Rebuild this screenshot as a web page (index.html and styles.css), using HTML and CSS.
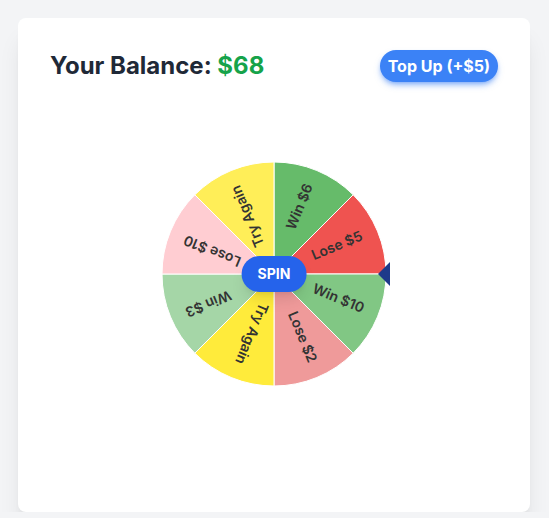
FILE: index.html
```html
<!DOCTYPE html>
<html lang="en">
<head>
<meta charset="utf-8">
<title>Spin the Wheel</title>
<link rel="stylesheet" href="styles.css">
</head>
<body>
<div class="card">
  <div class="header">
    <h1 class="balance">Your Balance: <span class="amount">$68</span></h1>
    <button class="topup">Top Up (+$5)</button>
  </div>
  <div class="wheel-wrap">
    <svg class="wheel" viewBox="0 0 224 224" width="224" height="224">
      <g class="segments">
        <path d="M112,112 L112,0 A112,112 0 0,1 191.196,32.804 Z" fill="#66bb6a"/>
        <path d="M112,112 L191.196,32.804 A112,112 0 0,1 224,112 Z" fill="#ef5350"/>
        <path d="M112,112 L224,112 A112,112 0 0,1 191.196,191.196 Z" fill="#81c784"/>
        <path d="M112,112 L191.196,191.196 A112,112 0 0,1 112,224 Z" fill="#ef9a9a"/>
        <path d="M112,112 L112,224 A112,112 0 0,1 32.804,191.196 Z" fill="#ffeb3b"/>
        <path d="M112,112 L32.804,191.196 A112,112 0 0,1 0,112 Z" fill="#a5d6a7"/>
        <path d="M112,112 L0,112 A112,112 0 0,1 32.804,32.804 Z" fill="#ffcdd2"/>
        <path d="M112,112 L32.804,32.804 A112,112 0 0,1 112,0 Z" fill="#ffee58"/>
      </g>
      <g class="labels">
        <text x="208" y="109" transform="rotate(-67.5 112 112)">Win $6</text>
        <text x="208" y="109" transform="rotate(-22.5 112 112)">Lose $5</text>
        <text x="208" y="109" transform="rotate(22.5 112 112)">Win $10</text>
        <text x="208" y="109" transform="rotate(67.5 112 112)">Lose $2</text>
        <text x="208" y="109" transform="rotate(112.5 112 112)">Try Again</text>
        <text x="208" y="109" transform="rotate(157.5 112 112)">Win $3</text>
        <text x="208" y="109" transform="rotate(202.5 112 112)">Lose $10</text>
        <text x="208" y="109" transform="rotate(247.5 112 112)">Try Again</text>
      </g>
    </svg>
    <button class="spin">SPIN</button>
    <div class="pointer"></div>
  </div>
</div>
</body>
</html>
```
FILE: styles.css
```css
* { box-sizing: border-box; }
body {
  margin: 0;
  padding: 18px 0 0 18px;
  background: #f3f4f6;
  font-family: Inter, "Noto Sans", sans-serif;
}
.card {
  width: 512px;
  height: 494px;
  background: #ffffff;
  border-radius: 8px;
  padding: 32px;
  box-shadow: 0 20px 25px -5px rgba(0,0,0,0.1), 0 8px 10px -6px rgba(0,0,0,0.1);
}
.header {
  display: flex;
  justify-content: space-between;
  align-items: center;
  height: 32px;
}
.balance {
  margin: 0;
  font-size: 24px;
  line-height: 32px;
  font-weight: 700;
  color: #1f2937;
}
.amount { color: #16a34a; }
.topup {
  font-family: inherit;
  font-size: 16px;
  line-height: 24px;
  font-weight: 700;
  color: #ffffff;
  background: #3b82f6;
  border: none;
  border-radius: 9999px;
  padding: 4px 8px;
  box-shadow: 0 4px 6px -1px rgba(59,130,246,0.5), 0 2px 4px -2px rgba(59,130,246,0.5);
}
.wheel-wrap {
  position: relative;
  width: 224px;
  height: 224px;
  margin: 80px auto 0;
}
.wheel { display: block; }
.segments path {
  stroke: #ffffff;
  stroke-width: 1;
}
.labels text {
  font-family: Inter, "Noto Sans", sans-serif;
  font-size: 14px;
  font-weight: 600;
  fill: #333333;
  text-anchor: end;
  dominant-baseline: central;
}
.spin {
  position: absolute;
  left: 50%;
  top: 50%;
  transform: translate(-50%, -50%);
  font-family: inherit;
  font-size: 14px;
  line-height: 20px;
  font-weight: 700;
  color: #ffffff;
  background: #2563eb;
  border: none;
  border-radius: 9999px;
  padding: 8px 16px;
  box-shadow: 0 10px 15px -3px rgba(0,0,0,0.1), 0 4px 6px -4px rgba(0,0,0,0.1);
}
.pointer {
  position: absolute;
  left: 216px;
  top: 100px;
  width: 0;
  height: 0;
  border-top: 12px solid transparent;
  border-bottom: 12px solid transparent;
  border-right: 12px solid #1e3a8a;
}
```
